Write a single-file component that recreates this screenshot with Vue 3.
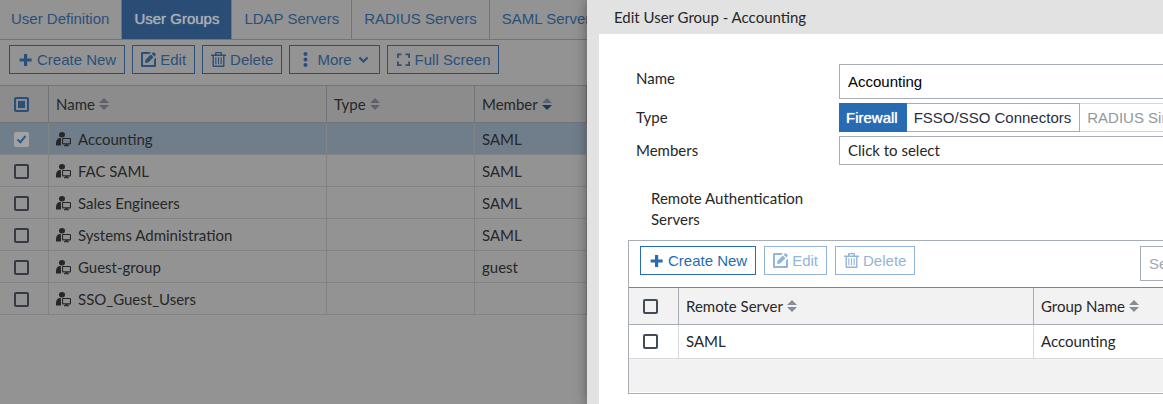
<template>
  <div class="page">
    <main class="groups">
      <nav class="tabs">
        <a v-for="tab in tabs" :key="tab" href="#" :class="['tab', tab == activeTab ? 'tab-active' : '']" @click.prevent="activeTab = tab">{{ tab }}</a>
      </nav>
      <div class="toolbar">
        <button v-for="btn in actions" :key="btn.label" type="button" class="btn">
          <svg class="icon" viewBox="0 0 15 15" aria-hidden="true"><path :d="icons[btn.icon]" fill-rule="evenodd" /></svg>
          <span>{{ btn.label }}</span>
          <svg v-if="btn.menu" class="icon" viewBox="0 0 15 15" aria-hidden="true"><path :d="icons.chevron" /></svg>
        </button>
      </div>
      <table class="grid">
        <colgroup>
          <col class="col-check" />
          <col class="col-name" />
          <col class="col-type" />
          <col />
        </colgroup>
        <thead>
          <tr>
            <th class="check-cell"><input type="checkbox" class="check" aria-label="Select all groups" :indeterminate="true" /></th>
            <th v-for="col in columns" :key="col">
              {{ col }}<svg class="sort" viewBox="0 0 10 12" aria-hidden="true"><path d="M5 0L10 5H0z" /><path :class="{ sorted: col == 'Member' }" d="M0 7H10L5 12z" /></svg>
            </th>
          </tr>
        </thead>
        <tbody>
          <tr v-for="row in groups" :key="row.name" :class="{ selected: row.checked }">
            <td class="check-cell"><input v-model="row.checked" type="checkbox" class="check" :aria-label="row.name" /></td>
            <td>
              <div class="name">
                <svg class="icon" viewBox="0 0 15 15" aria-hidden="true"><path :d="icons.user" fill-rule="evenodd" /></svg>
                <span>{{ row.name }}</span>
              </div>
            </td>
            <td></td>
            <td>{{ row.member }}</td>
          </tr>
        </tbody>
      </table>
    </main>

    <aside class="drawer">
      <h1 class="title">Edit User Group - Accounting</h1>
      <form class="body" @submit.prevent>
        <div class="form-row">
          <label class="label" for="group-name">Name</label>
          <input id="group-name" v-model="groupName" type="text" class="field text-input" />
        </div>
        <div class="form-row">
          <span id="type-label" class="label">Type</span>
          <div class="types" role="group" aria-labelledby="type-label">
            <button v-for="t in types" :key="t.label" type="button" :disabled="t.disabled" :class="['type', t.label == groupType ? 'type-active' : '']" @click="groupType = t.label">{{ t.label }}</button>
          </div>
        </div>
        <div class="form-row">
          <span id="members-label" class="label">Members</span>
          <button type="button" class="field members" aria-labelledby="members-label">Click to select</button>
        </div>
        <h2 class="sub-title">Remote Authentication Servers</h2>
        <section class="remote">
          <div class="remote-bar">
            <button v-for="btn in remoteActions" :key="btn.label" type="button" class="btn" :disabled="btn.disabled">
              <svg class="icon" viewBox="0 0 15 15" aria-hidden="true"><path :d="icons[btn.icon]" fill-rule="evenodd" /></svg>
              <span>{{ btn.label }}</span>
            </button>
            <input type="search" class="text-input search" placeholder="Search" aria-label="Search" />
          </div>
          <table class="grid">
            <colgroup>
              <col class="col-pick" />
              <col class="col-server" />
              <col />
            </colgroup>
            <thead>
              <tr>
                <th class="check-cell"><input type="checkbox" class="check" aria-label="Select all servers" /></th>
                <th v-for="col in remoteColumns" :key="col">
                  {{ col }}<svg class="sort" viewBox="0 0 10 12" aria-hidden="true"><path d="M5 0L10 5H0z" /><path d="M0 7H10L5 12z" /></svg>
                </th>
              </tr>
            </thead>
            <tbody>
              <tr>
                <td class="check-cell"><input type="checkbox" class="check" aria-label="SAML" /></td>
                <td>SAML</td>
                <td>Accounting</td>
              </tr>
            </tbody>
          </table>
          <div class="remote-foot"></div>
        </section>
      </form>
    </aside>
  </div>
</template>

<script setup>
import { ref } from "vue";

const tabs = ['User Definition', 'User Groups', 'LDAP Servers', 'RADIUS Servers', 'SAML Servers']
const activeTab = ref('User Groups')
const columns = ['Name', 'Type', 'Member']
const remoteColumns = ['Remote Server', 'Group Name']
const actions = [
  { label: 'Create New', icon: 'plus' },
  { label: 'Edit', icon: 'edit' },
  { label: 'Delete', icon: 'trash' },
  { label: 'More', icon: 'dots', menu: true },
  { label: 'Full Screen', icon: 'expand' }
]
const remoteActions = [
  { label: 'Create New', icon: 'plus' },
  { label: 'Edit', icon: 'edit', disabled: true },
  { label: 'Delete', icon: 'trash', disabled: true }
]
const groups = ref([
  { name: 'Accounting', member: 'SAML', checked: true },
  { name: 'FAC SAML', member: 'SAML', checked: false },
  { name: 'Sales Engineers', member: 'SAML', checked: false },
  { name: 'Systems Administration', member: 'SAML', checked: false },
  { name: 'Guest-group', member: 'guest', checked: false },
  { name: 'SSO_Guest_Users', member: '', checked: false }
])
const types = [
  { label: 'Firewall' },
  { label: 'FSSO/SSO Connectors' },
  { label: 'RADIUS Single Sign-On (RSSO)', disabled: true },
  { label: 'Guest', disabled: true }
]
const groupName = ref('Accounting')
const groupType = ref('Firewall')

const icons = {
  plus: 'M6 2h3.2v4.4h4.4v3.2H9.2V14H6V9.6H1.6V6.4H6z',
  edit: 'M1 0H10L8.2 2H2V13H13V7.5L15 5.5V14a1 1 0 0 1-1 1H1a1 1 0 0 1-1-1V1a1 1 0 0 1 1-1z M4 11L4.5 7.8L9.8 2.5L12.5 5.2L7.2 10.5z M10.6 1.7L11.8 .5a1 1 0 0 1 1.4 0L14.5 1.8a1 1 0 0 1 0 1.4L13.3 4.4z',
  trash: 'M5 0h5a1 1 0 0 1 1 1v1.5h4V4H13.5V14a1 1 0 0 1-1 1h-10a1 1 0 0 1-1-1V4H0V2.5H4V1a1 1 0 0 1 1-1z M5.5 1.3V2.5H9.5V1.3z M2.9 4V13.6H12.1V4z M4.3 5.3H5.4V12.3H4.3z M6.95 5.3H8.05V12.3H6.95z M9.6 5.3H10.7V12.3H9.6z',
  dots: 'M7.5 0a2 2 0 1 1 0 4a2 2 0 1 1 0-4z M7.5 5.5a2 2 0 1 1 0 4a2 2 0 1 1 0-4z M7.5 11a2 2 0 1 1 0 4a2 2 0 1 1 0-4z',
  expand: 'M1 1.5H5.5V3.3H2.8V6H1z M9.5 1.5H14V6H12.2V3.3H9.5z M1 9.5H2.8V12.2H5.5V14H1z M12.2 9.5H14V14H9.5V12.2H12.2z',
  chevron: 'M2.6 6.3L4.2 4.7L7.5 7.9L10.8 4.7L12.4 6.3L7.5 11.1z',
  user: 'M6 0a3 2.7 0 1 1 0 5.4a3 2.7 0 1 1 0-5.4z M0 13.5V10.8Q.3 7 3.6 5.8L5 6.4V13.5z M7 6h7a1 1 0 0 1 1 1v4.5a1 1 0 0 1-1 1H11.5V13.3H13V14.3H8V13.3H9.5V12.5H7a1 1 0 0 1-1-1V7a1 1 0 0 1 1-1z M7.1 7.1V11.3H13.9V7.1z'
}
</script>

<style>
body {
  margin: 0;
  background: #939393;
}
</style>

<style scoped>
.page {
  display: flex;
  min-height: 100vh;
  overflow: hidden;
  font-family: Lato, "Liberation Sans", sans-serif;
  font-size: 15px;
  line-height: 21px;
  color: #272727;
}
.page * {
  box-sizing: border-box;
}
.groups {
  flex: 1;
  min-width: 0;
  overflow: hidden;
  background: #939393;
  --line: #6f757b;
  --row-line: #838383;
  --head: #8c8c8c;
  --box: #343b44;
  --sort: #5e636b;
}
.tabs {
  display: flex;
  height: 40px;
  border-bottom: 1px solid var(--line);
}
.tab {
  flex: none;
  padding: 0 12px 0 11px;
  border-right: 1px solid var(--line);
  font-family: "Liberation Sans", Arial, sans-serif;
  line-height: 38px;
  color: #2a507a;
  text-decoration: none;
}
.tab + .tab {
  padding-left: 12px;
}
.tab-active {
  background: #294d75;
  color: #a9afb5;
  text-shadow: 0 0 1px #a9afb5;
}
.toolbar {
  display: flex;
  gap: 7px;
  padding: 5px 9px 11px;
  border-bottom: 1px solid var(--line);
}
.btn {
  display: flex;
  flex: none;
  align-items: center;
  gap: 4px;
  height: 29px;
  padding: 0 8px;
  border: 1px solid #2a507a;
  background: transparent;
  font-family: "Liberation Sans", Arial, sans-serif;
  font-size: 15px;
  color: #2a507a;
}
.icon {
  flex: none;
  width: 15px;
  height: 15px;
  fill: currentColor;
}
.grid {
  width: 100%;
  table-layout: fixed;
  border-collapse: separate;
  border-spacing: 0;
}
.col-check {
  width: 49px;
}
.col-name {
  width: 278px;
}
.col-type {
  width: 148px;
}
.col-pick {
  width: 50px;
}
.col-server {
  width: 355px;
}
.grid th {
  height: 37px;
  padding: 0 7px;
  border-right: 1px solid var(--line);
  border-bottom: 1px solid var(--line);
  background: var(--head);
  font-weight: normal;
  text-align: left;
  white-space: nowrap;
}
.grid td {
  height: 32px;
  padding: 2px 7px 0;
  border-right: 1px solid var(--row-line);
  border-bottom: 1px solid var(--row-line);
}
.grid .check-cell {
  padding-right: 5px;
  padding-left: 0;
}
.selected td {
  background: #707e8b;
}
.check {
  display: block;
  appearance: none;
  width: 15px;
  height: 15px;
  margin: 0 auto;
  border: 2px solid var(--box);
  border-radius: 2px;
}
.check:indeterminate {
  padding: 2px;
  border-color: #2a507a;
  background: #2a507a content-box;
}
.check:checked {
  border-color: #a2a2a2;
  background: #a2a2a2;
}
.check:checked::after {
  content: "";
  display: block;
  width: 3px;
  height: 7px;
  margin: 0 0 0 3px;
  border: solid #2a5a92;
  border-width: 0 2px 2px 0;
  transform: rotate(40deg);
}
.name {
  display: flex;
  align-items: center;
  gap: 7px;
}
.sort {
  width: 10px;
  height: 12px;
  margin-left: 4px;
  fill: var(--sort);
}
.sorted {
  fill: #153a5c;
}
.drawer {
  position: relative;
  flex: 0 0 49.53%;
  min-width: 0;
  width: 0;
  padding-left: 12px;
  background: #e2e2e2;
  box-shadow: 0 0 12px rgba(0, 0, 0, .4);
  --line: #a6adb5;
  --row-line: #d9d9d9;
  --head: #f2f2f2;
  --box: #414b59;
  --sort: #858d99;
}
.title {
  margin: 0;
  padding: 0 15px;
  font-size: 15px;
  font-weight: normal;
  line-height: 34px;
}
.body {
  min-width: 724px;
  min-height: calc(100vh - 34px);
  padding: 30px 22px 11px 29px;
  background: #fff;
}
.form-row {
  display: flex;
  align-items: flex-start;
  margin-bottom: 4px;
  padding-left: 8px;
}
.label {
  flex: 0 0 203px;
  line-height: 29px;
}
.field {
  flex: 1;
  min-width: 0;
}
.text-input {
  height: 35px;
  padding: 0 8px;
  border: 1px solid #a6adb5;
  border-radius: 0;
  outline: none;
  background: #fff;
  font-family: "Liberation Sans", Arial, sans-serif;
  font-size: 15px;
  color: #000;
}
.text-input::placeholder {
  color: #a0a7b0;
}
.types {
  display: flex;
}
.type {
  height: 29px;
  padding: 0 8px 0 7px;
  border: 1px solid #a6adb5;
  border-left-width: 0;
  background: #fff;
  font-family: "Liberation Sans", Arial, sans-serif;
  font-size: 15px;
  white-space: nowrap;
  color: #28303c;
}
.type:disabled {
  border-color: #d3d6da;
  color: #93979d;
}
.type-active {
  border-color: #276bb3;
  background: #276bb3;
  color: #fff;
  text-shadow: 0 0 1px #fff;
}
.members {
  height: 29px;
  padding: 0 8px;
  border: 1px solid #a6adb5;
  background: #fff;
  font: inherit;
  text-align: left;
  color: inherit;
}
.sub-title {
  width: 200px;
  margin: 23px 0 10px;
  padding-left: 23px;
  font-size: 15px;
  font-weight: normal;
}
.remote {
  border: 1px solid #a6adb5;
}
.remote-bar {
  display: flex;
  align-items: flex-start;
  gap: 8px;
  padding: 5px 11px 6px;
  border-bottom: 1px solid #80868f;
}
.remote .btn {
  border-color: #276bb3;
  color: #276bb3;
}
.remote .btn:disabled {
  border-color: #93b5d9;
  color: #93b5d9;
}
.search {
  width: 149px;
  margin-left: auto;
}
.remote td {
  height: 34px;
  padding-top: 0;
}
.remote-foot {
  height: 34px;
  border-bottom: 1px solid #fff;
  background: #f2f2f2;
}
</style>
